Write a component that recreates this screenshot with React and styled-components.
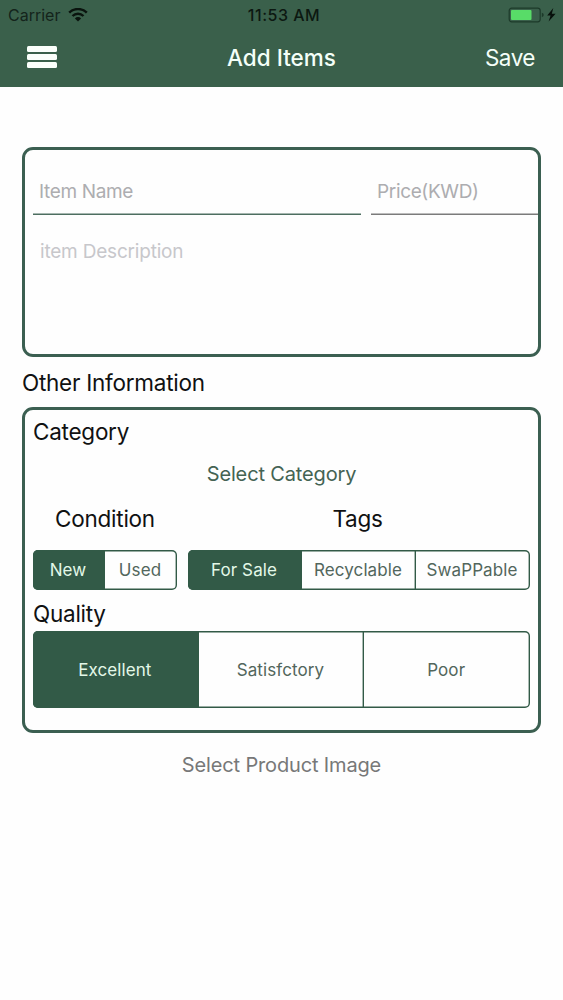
import { useState } from "react";
import styled, { createGlobalStyle } from "styled-components";

const green = "#325a47";

const GlobalStyle = createGlobalStyle`
  * {
    box-sizing: border-box;
  }

  body {
    margin: 0;
    background: #fff;
    font-family: Inter, "Liberation Sans", sans-serif;
  }

  button,
  input,
  textarea {
    font: inherit;
    letter-spacing: inherit;
  }
`;

const Screen = styled.div`
  width: 563px;
  height: 1000px;
  overflow: hidden;
  background: #fefefe;
`;

const Header = styled.header`
  height: 87px;
  background: #3a604b;
`;

const StatusBar = styled.div`
  display: grid;
  grid-template-columns: 1fr auto 1fr;
  align-items: center;
  height: 29px;
  padding: 0 7px 0 8px;
  font-size: 16px;
  color: #14241b;
`;

const Carrier = styled.div`
  display: flex;
  align-items: center;
  gap: 8px;
  height: 27px;
`;

const Clock = styled.div`
  padding-left: 4px;
  font-weight: 500;
  font-size: 16px;
  letter-spacing: 0.5px;
  color: #0c1811;
`;

const Power = styled.div`
  display: flex;
  justify-content: flex-end;
`;

const NavBar = styled.nav`
  display: grid;
  grid-template-columns: 1fr auto 1fr;
  align-items: center;
  height: 56px;
  padding: 0 28px 0 27px;
  color: #f4fff8;
`;

const MenuButton = styled.button`
  display: flex;
  flex-direction: column;
  gap: 2px;
  width: 30px;
  padding: 0;
  border: 0;
  background: none;
`;

const MenuBar = styled.span`
  height: 6px;
  border-radius: 1.5px;
  background: #fbfffb;
`;

const Title = styled.h1`
  margin: 0;
  padding-left: 1px;
  font-size: 22.5px;
  font-weight: 500;
`;

const SaveButton = styled.button`
  justify-self: end;
  padding: 0;
  border: 0;
  background: none;
  color: inherit;
  font-size: 22.5px;
  letter-spacing: -0.5px;
`;

const Content = styled.main`
  display: flex;
  flex-direction: column;
  padding: 60px 22px 0;
`;

const Card = styled.section`
  height: ${({ $height }) => $height}px;
  border: 3px solid #3b5f51;
  border-radius: 11px;
  padding-left: 8px;
`;

const Fields = styled.div`
  display: grid;
  grid-template-columns: 327.5px 1fr;
  column-gap: 10.5px;
  padding-top: 19px;
`;

const Field = styled.input`
  width: 100%;
  height: 45.5px;
  padding: 0 6px;
  border: 0;
  border-radius: 0.1px;
  box-shadow: inset 0 -1.5px ${({ $line }) => $line};
  outline: none;
  background: none;
  font-size: 19px;
  letter-spacing: -0.35px;

  &::placeholder {
    color: #adadb0;
  }
`;

const Description = styled.textarea`
  display: block;
  width: 100%;
  height: 120px;
  margin-top: 25.5px;
  padding: 0 7px;
  border: 0;
  outline: none;
  resize: none;
  background: none;
  font-size: 19px;
  line-height: 24px;
  letter-spacing: -0.2px;

  &::placeholder {
    color: #c7c7cb;
  }
`;

const Label = styled.h2`
  margin: 0;
  padding: ${({ $padding }) => $padding || 0};
  font-size: 22.5px;
  font-weight: 400;
  line-height: ${({ $line }) => $line}px;
  text-align: ${({ $align }) => $align || "left"};
  letter-spacing: -0.25px;
  color: #101112;
`;

const Options = styled.div`
  display: grid;
  grid-template-columns: 144px 342px;
  column-gap: 11px;
  row-gap: 6px;
`;

const LinkButton = styled.button`
  display: block;
  width: 100%;
  height: ${({ $height }) => $height}px;
  padding: 0 ${({ $inset }) => $inset || 0}px 0 0;
  border: 0;
  background: none;
  color: ${({ $color }) => $color};
  font-size: 20px;
  letter-spacing: -0.15px;
`;

const Segments = styled.div`
  display: grid;
  grid-auto-flow: column;
  grid-auto-columns: 1fr;
  width: ${({ $width }) => $width}px;
  height: ${({ $height }) => $height}px;
  box-shadow: inset 0 0 0 1.4px ${green};
  border-radius: 5px;
  overflow: hidden;
`;

const Segment = styled.button`
  min-width: 0;
  padding: 0 2px 0 0;
  border: 0;
  background: ${({ $active }) => ($active ? green : "transparent")};
  color: ${({ $active }) => ($active ? "#e3f8e8" : "#52665c")};
  font-size: 17px;
  letter-spacing: 0.1px;
  white-space: nowrap;

  &:not(:last-child) {
    border-radius: 0.1px;
    box-shadow: inset -1.4px 0 ${green};
  }
`;

const WifiIcon = () => (
  <svg width="20" height="14" viewBox="0 0 20 14" fill="none" stroke="#0a140e">
    <path d="M1.2 4.7a12.5 12.5 0 0 1 17.6 0" strokeWidth="2.5" />
    <path d="M4.5 8a7.8 7.8 0 0 1 11 0" strokeWidth="2.4" />
    <path d="M10 13.5 6.9 10.4a4.4 4.4 0 0 1 6.2 0Z" fill="#0a140e" stroke="none" />
  </svg>
);

const BatteryIcon = () => (
  <svg width="48" height="16" viewBox="0 0 48 16">
    <rect x="1.2" y="1.2" width="31" height="13.6" rx="2.5" fill="none" stroke="#1d3a2a" strokeWidth="1.2" />
    <rect x="3" y="3" width="20.5" height="10" rx="1" fill="#58dc68" />
    <path d="M33.8 5.8q2 .6 2 2.2t-2 2.2Z" fill="#1d3a2a" />
    <path d="M45.3 1 39.2 8.6h3.4l-2 6 7-7.8h-3.8Z" fill="#07100b" />
  </svg>
);

const SegmentedControl = ({ items, width, height }) => {
  const [selected, setSelected] = useState(0);
  return (
    <Segments $width={width} $height={height}>
      {items.map((item, index) => (
        <Segment
          key={item}
          $active={selected === index}
          onClick={() => setSelected(index)}
        >
          {item}
        </Segment>
      ))}
    </Segments>
  );
};

const App = () => (
  <>
    <GlobalStyle />
    <Screen>
      <Header>
        <StatusBar>
          <Carrier>
            Carrier
            <WifiIcon />
          </Carrier>
          <Clock>11:53 AM</Clock>
          <Power>
            <BatteryIcon />
          </Power>
        </StatusBar>
        <NavBar>
          <MenuButton aria-label="Menu">
            <MenuBar />
            <MenuBar />
            <MenuBar />
          </MenuButton>
          <Title>Add Items</Title>
          <SaveButton>Save</SaveButton>
        </NavBar>
      </Header>
      <Content>
        <Card $height={210}>
          <Fields>
            <Field placeholder="Item Name" $line="#4d6e60" />
            <Field placeholder="Price(KWD)" $line="#7b7b7b" />
          </Fields>
          <Description placeholder="item Description" />
        </Card>
        <Label $line={48} $padding="2px 0 0">
          Other Information
        </Label>
        <Card $height={326}>
          <Label $line={44}>Category</Label>
          <LinkButton $height={40} $inset={8} $color="#446353">
            Select Category
          </LinkButton>
          <Options>
            <Label $line={50} $align="center">
              Condition
            </Label>
            <Label $line={50} $align="center" $padding="0 3px 0 0">
              Tags
            </Label>
            <SegmentedControl items={["New", "Used"]} width={144} height={40} />
            <SegmentedControl
              items={["For Sale", "Recyclable", "SwaPPable"]}
              width={342}
              height={40}
            />
          </Options>
          <Label $line={35} $padding="6px 0 0">
            Quality
          </Label>
          <SegmentedControl
            items={["Excellent", "Satisfctory", "Poor"]}
            width={497}
            height={77}
          />
        </Card>
        <LinkButton $height={64} $color="#777878">
          Select Product Image
        </LinkButton>
      </Content>
    </Screen>
  </>
);

export default App;
